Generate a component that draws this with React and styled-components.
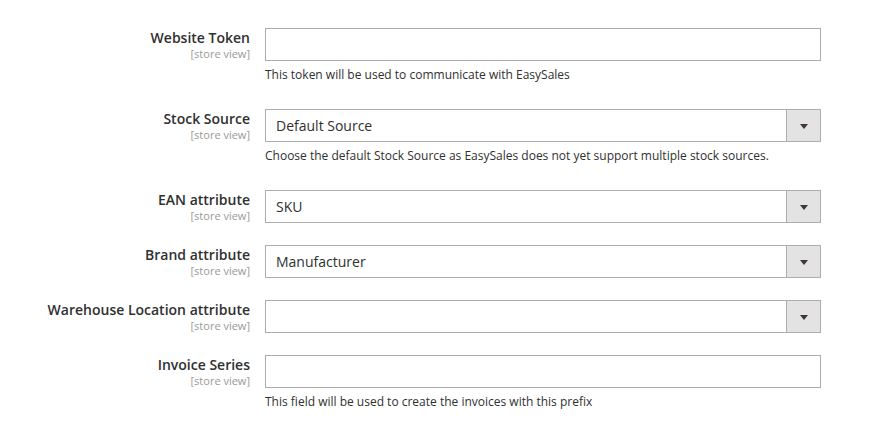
import React from 'react';
import styled, { createGlobalStyle } from 'styled-components';

const GlobalStyle = createGlobalStyle`
  body {
    margin: 0;
    background: #fff;
    font-family: 'Open Sans', 'Liberation Sans', sans-serif;
    color: #303030;
  }
`;

const Form = styled.div`
  padding-top: 28px;
  display: flex;
  flex-direction: column;
`;

const Row = styled.div`
  display: grid;
  grid-template-columns: 250px 556px;
  column-gap: 15px;
  margin-bottom: 22px;
`;

const LabelCell = styled.div`
  text-align: right;
`;

const Label = styled.div`
  font-size: 14px;
  font-weight: 600;
  line-height: 19px;
  color: #303030;
`;

const Scope = styled.div`
  font-size: 11px;
  line-height: 13px;
  color: #999;
`;

const Field = styled.div`
  display: flex;
  flex-direction: column;
`;

const Input = styled.div`
  box-sizing: border-box;
  height: 33px;
  border: 1px solid #adadad;
  background: #fff;
  display: flex;
  align-items: center;
  font-size: 14px;
  color: #303030;
  padding-left: 10px;
  position: relative;
`;

const SelectButton = styled.div`
  position: absolute;
  right: 0;
  top: 0;
  bottom: 0;
  width: 34px;
  box-sizing: border-box;
  border-left: 1px solid #adadad;
  background: #e3e3e3;
  display: flex;
  align-items: center;
  justify-content: center;
`;

const Arrow = styled.span`
  width: 0;
  height: 0;
  border-left: 4px solid transparent;
  border-right: 4px solid transparent;
  border-top: 5px solid #41362f;
  margin-top: 1px;
`;

const Note = styled.div`
  font-size: 12px;
  line-height: 18px;
  margin: 5px 0 3px;
  color: #303030;
`;

const fields = [
  { label: 'Website Token', note: 'This token will be used to communicate with EasySales' },
  {
    label: 'Stock Source',
    select: true,
    value: 'Default Source',
    note: 'Choose the default Stock Source as EasySales does not yet support multiple stock sources.',
  },
  { label: 'EAN attribute', select: true, value: 'SKU' },
  { label: 'Brand attribute', select: true, value: 'Manufacturer' },
  { label: 'Warehouse Location attribute', select: true, value: '' },
  { label: 'Invoice Series', note: 'This field will be used to create the invoices with this prefix' },
];

const App = () => (
  <>
    <GlobalStyle />
    <Form>
      {fields.map((f) => (
        <Row key={f.label}>
          <LabelCell>
            <Label>{f.label}</Label>
            <Scope>[store view]</Scope>
          </LabelCell>
          <Field>
            <Input>
              {f.value}
              {f.select && (
                <SelectButton>
                  <Arrow />
                </SelectButton>
              )}
            </Input>
            {f.note && <Note>{f.note}</Note>}
          </Field>
        </Row>
      ))}
    </Form>
  </>
);

export default App;
